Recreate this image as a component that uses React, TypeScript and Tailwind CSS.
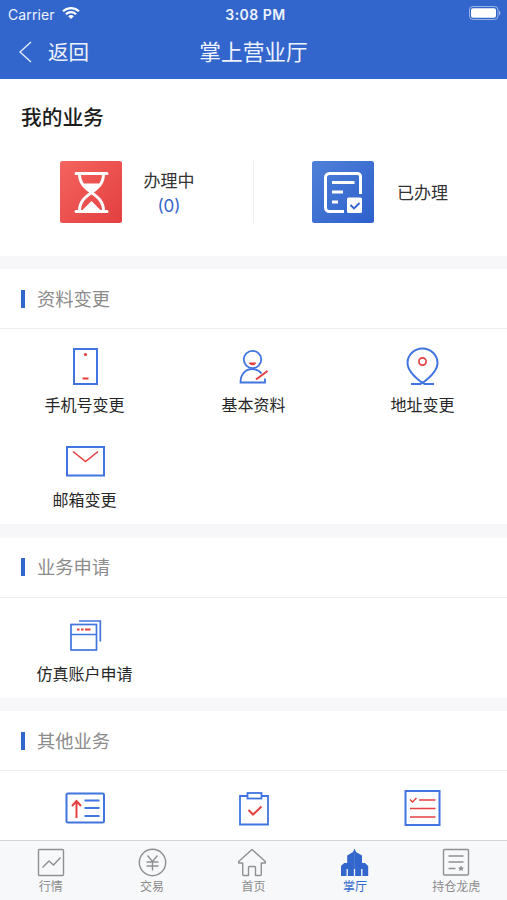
import type { ReactNode } from "react";

const BLUE = "#4075e0";
const RED = "#e5403f";

function StatusBar() {
  return (
    <div className="grid h-7 grid-cols-3 items-center pr-1.5 pl-2 text-[#eef3ff]">
      <div className="flex items-center gap-[7px] text-[14px] tracking-[0.1px]">
        Carrier
        <svg className="-mt-0.5" width="18" height="12" viewBox="0 0 18 12" fill="none" stroke="#fff" strokeWidth="2.2">
          <path d="M1 4.3C5.4 0 12.6 0 17 4.3" />
          <path d="M3.9 7.2c2.9-2.7 7.3-2.7 10.2 0" />
          <path d="M9 12 6.2 9.2c1.6-1.5 4-1.5 5.6 0Z" fill="#fff" stroke="none" />
        </svg>
      </div>
      <div className="pl-0.5 text-center text-[14px] font-semibold tracking-[0.5px]">3:08 PM</div>
      <svg className="-mt-0.5 justify-self-end" width="32" height="14" viewBox="0 0 32 14">
        <rect x="0.5" y="0.5" width="28.5" height="13" rx="3.5" fill="none" stroke="#fff" strokeOpacity="0.5" />
        <rect x="2" y="2.2" width="25" height="9.6" rx="2" fill="#fff" />
        <path d="M30 4.5c1.8.8 1.8 4.2 0 5Z" fill="#fff" fillOpacity="0.5" />
      </svg>
    </div>
  );
}

function NavBar() {
  return (
    <div className="grid h-12 grid-cols-3 items-center text-[#eef3ff]">
      <button className="flex items-center gap-4 pl-[19px] text-[20.5px] leading-6">
        <svg width="13" height="22" viewBox="0 0 13 22" fill="none" stroke="#e4ecff" strokeWidth="1.4">
          <path d="M12 1 1 11l11 10" />
        </svg>
        <span className="pt-px">返回</span>
      </button>
      <div className="text-center text-[21.7px] leading-6 whitespace-nowrap">掌上营业厅</div>
    </div>
  );
}

function HourglassTile() {
  return (
    <svg width="62" height="62" viewBox="0 0 62 62">
      <defs>
        <linearGradient id="red" x1="0" y1="0" x2="1" y2="1">
          <stop offset="0" stopColor="#f4645f" />
          <stop offset="1" stopColor="#e33f40" />
        </linearGradient>
      </defs>
      <rect width="62" height="62" rx="2.5" fill="url(#red)" />
      <g fill="none" stroke="#fff" strokeWidth="3" strokeLinecap="round">
        <path d="M16 12.5h31M16 50.5h31" />
        <path d="M19.5 13c0 10 6 14 12 18.5C37.5 27 43.5 23 43.5 13" />
        <path d="M19.5 50c0-10 6-14 12-18.5C37.5 36 43.5 40 43.5 50" />
      </g>
      <path d="M22 22.5h19c-2 4-6 6-9.5 9.5-3.5-3.5-7.5-5.5-9.5-9.5Z" fill="#fff" />
      <path d="m31.5 40 10 10h-20Z" fill="#fff" />
    </svg>
  );
}

function DoneTile() {
  return (
    <svg width="62" height="62" viewBox="0 0 62 62">
      <defs>
        <linearGradient id="blue" x1="0" y1="0" x2="1" y2="1">
          <stop offset="0" stopColor="#4f80d8" />
          <stop offset="1" stopColor="#2d60cc" />
        </linearGradient>
      </defs>
      <rect width="62" height="62" rx="2.5" fill="url(#blue)" />
      <g fill="none" stroke="#fff" strokeWidth="3">
        <path d="M48.5 33V15.5a3 3 0 0 0-3-3h-28a4 4 0 0 0-4 4v30a4 4 0 0 0 4 4H32" />
        <path d="M20 21.5h22.5M20 31h11M20 41h6" />
      </g>
      <rect x="35" y="36.5" width="15" height="15.5" rx="1.5" fill="#fff" />
      <path d="m38.5 44 3.5 3.5 5.5-5.5" fill="none" stroke="#2f62cd" strokeWidth="1.8" />
    </svg>
  );
}

function Icon({ children }: { children: ReactNode }) {
  return (
    <svg width="40" height="40" viewBox="0 0 40 40" fill="none" stroke={BLUE} strokeWidth="2">
      {children}
    </svg>
  );
}

const phoneIcon = (
  <Icon>
    <rect x="9" y="3" width="23" height="35" />
    <circle cx="20.5" cy="8.5" r="1.6" fill={RED} stroke="none" />
    <path d="M17.5 32.5h6" stroke={RED} />
  </Icon>
);

const profileIcon = (
  <Icon>
    <g strokeWidth="1.8">
      <circle cx="18.5" cy="13.5" r="8.7" />
      <path d="M27.5 27.5C25 24.5 22 23 18.5 23c-7 0-12 5-12 13.5H31v-4" />
    </g>
    <path d="M14.8 16.5h7.4c-.5 3.7-6.9 3.7-7.4 0Z" fill={RED} stroke="none" />
    <path d="M22 33.5 33.5 25" stroke={RED} />
  </Icon>
);

const pinIcon = (
  <Icon>
    <path d="M19.5 37C10 30 4.5 23 4.5 17a15 14.5 0 0 1 30 0c0 6-5.5 13-15 20Z" />
    <path d="M8 38h9.5l2-1.5 2 1.5H31" />
    <circle cx="19.5" cy="15.5" r="3.6" stroke={RED} strokeWidth="1.7" />
  </Icon>
);

const mailIcon = (
  <Icon>
    <rect x="2" y="6" width="37" height="28.5" />
    <path d="m8 10.5 12.5 10 12.5-10" stroke={RED} strokeWidth="1.6" />
  </Icon>
);

const accountIcon = (
  <Icon>
    <g strokeWidth="1.7">
      <rect x="6" y="9.5" width="25.5" height="25.5" />
      <path d="M6 19.5h25.500M14 6h21.300v20.500" />
    </g>
    <path d="M12 14.5h2.500M16 14.500h2.500M20 14.500h5.500" stroke={RED} />
  </Icon>
);

const cardIcon = (
  <Icon>
    <rect x="1.5" y="5.5" width="37.5" height="29" rx="1.5" />
    <path d="M19.5 12.500h15M19.500 20h15M19.500 28h15" />
    <path d="M11.500 30V13m-4.500 5 4.500-5 4.500 5" stroke={RED} />
  </Icon>
);

const clipboardIcon = (
  <Icon>
    <g strokeWidth="1.8">
      <path d="M13.5 8H6v28.5h28V8h-6.500" />
      <rect x="13.5" y="5" width="14" height="5.5" />
    </g>
    <path d="m14.500 22 4.500 4.500 8.500-8" stroke={RED} />
  </Icon>
);

const checklistIcon = (
  <Icon>
    <rect x="2.5" y="3" width="34" height="34" />
    <g stroke={RED} strokeWidth="1.5">
      <path d="M16 12h16.500M7 20.500h25.500M7 29h25.500" />
      <path d="m7 11.500 2.500 2.500 4-4" />
    </g>
  </Icon>
);

const sections = [
  {
    title: "资料变更",
    items: [
      { label: "手机号变更", icon: phoneIcon },
      { label: "基本资料", icon: profileIcon },
      { label: "地址变更", icon: pinIcon },
      { label: "邮箱变更", icon: mailIcon },
    ],
  },
  { title: "业务申请", items: [{ label: "仿真账户申请", icon: accountIcon }] },
  {
    title: "其他业务",
    items: [
      { label: "", icon: cardIcon },
      { label: "", icon: clipboardIcon },
      { label: "", icon: checklistIcon },
    ],
  },
];

const tabs = [
  {
    label: "行情",
    icon: (
      <>
        <rect x="2.5" y="2.5" width="25" height="26" rx="1" />
        <path d="m6.5 20.5 6.5-6.5 4.5 4 7-7.5" />
      </>
    ),
  },
  {
    label: "交易",
    icon: (
      <>
        <circle cx="15.5" cy="15.5" r="13.2" />
        <path d="m10.5 8.5 5 6 5-6M15.5 14.5v9M9.5 15h12M9.5 19h12" />
      </>
    ),
  },
  {
    label: "首页",
    icon: (
      <path
        d="M14 2.5.7 14.5v1.5h4v11.5q0 1 1 1h4.8v-8q0-1 1-1h5q1 0 1 1v8h4.8q1 0 1-1V16h4v-1.5Z"
        strokeLinejoin="round"
      />
    ),
  },
  {
    label: "掌厅",
    active: true,
    icon: (
      <>
        <path
          d="M14.5 1.5 16 5l6 3.5V16h3l3.2 3v10H1V19l3.2-3h3V8.5L13 5Z"
          fill="#3366cc"
          stroke="none"
        />
        <path d="M7.2 22v7M21.8 22v7M14.5 22v7" stroke="#f7f8fa" strokeWidth="1.3" />
        <path d="M14.5 6v16" stroke="#5b87dc" strokeWidth="0.6" />
      </>
    ),
  },
  {
    label: "持仓龙虎",
    icon: (
      <>
        <rect x="2.5" y="2.5" width="25" height="25.5" rx="1" />
        <path d="M7.5 9h15M7.5 15h15M7.5 21.5h7" />
        <path d="m20 18.5 1 2h2l-1.500 1.500.5 2-2-1-2 1 .5-2-1.500-1.500h2Z" fill="#909090" stroke="none" />
      </>
    ),
  },
];

function MyBusiness() {
  return (
    <section className="h-[177px] shrink-0 bg-white pt-[22px]">
      <h2 className="pl-[21px] text-[20.7px] leading-[33px] font-medium text-[#1c1c1c]">我的业务</h2>
      <div className="mt-[27px] flex">
        <div className="flex w-[254px] items-center gap-[22px] border-r border-[#f1f1f1] pl-[59.5px]">
          <HourglassTile />
          <div className="pt-[3px] text-center text-[17px] leading-[25px] text-[#333]">
            办理中
            <div className="text-[#3366cc]">(0)</div>
          </div>
        </div>
        <div className="flex items-center gap-[23px] pl-[58px] text-[17px] text-[#333]">
          <DoneTile />
          <span className="pt-[3px]">已办理</span>
        </div>
      </div>
    </section>
  );
}

export default function App() {
  return (
    <div className="flex h-[900px] w-[507px] flex-col overflow-hidden bg-[#f7f7f9] font-['Inter','Noto_Sans_CJK_SC',sans-serif]">
      <header className="h-[79px] shrink-0 bg-[#3366cc]">
        <StatusBar />
        <NavBar />
      </header>

      <main className="flex min-h-0 flex-1 flex-col gap-[13.4px] overflow-hidden">
        <MyBusiness />
        {sections.map((section) => (
          <section key={section.title} className="shrink-0 bg-white pb-[5px]">
            <div className="flex h-[60px] items-center gap-3 border-b border-[#efefef] pl-[21px]">
              <span className="h-[18px] w-1 bg-[#3366cc]" />
              <h3 className="text-[18.3px] leading-6 text-[#8c8c8c]">{section.title}</h3>
            </div>
            <div className="grid grid-cols-3">
              {section.items.map((item, i) => (
                <div key={i} className="flex h-[95px] flex-col items-center gap-[7px] pt-[17px]">
                  {item.icon}
                  <span className="text-[16px] leading-6 text-[#262626]">{item.label}</span>
                </div>
              ))}
            </div>
          </section>
        ))}
      </main>

      <nav className="grid h-[60px] shrink-0 grid-cols-5 border-t border-[#d4d5d7] bg-[#f7f8fa]">
        {tabs.map((tab) => (
          <div
            key={tab.label}
            className={`flex flex-col items-center gap-px pt-1.5 text-[12px] leading-[18px] ${
              tab.active ? "text-[#3366cc]" : "text-[#8b8b8b]"
            }`}
          >
            <svg width="30" height="30" viewBox="0 0 30 30" fill="none" stroke="#909090" strokeWidth="1.4">
              {tab.icon}
            </svg>
            {tab.label}
          </div>
        ))}
      </nav>
    </div>
  );
}
